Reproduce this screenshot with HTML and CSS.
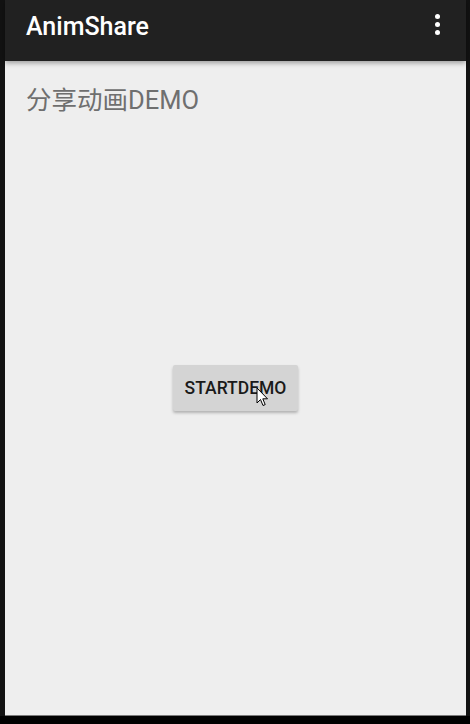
FILE: index.html
```html
<!DOCTYPE html>
<html>
<head>
<meta charset="utf-8">
<link rel="stylesheet" href="styles.css">
</head>
<body>
<div class="frame">
  <div class="screen">
    <header class="appbar">
      <span class="title">AnimShare</span>
      <span class="menu"><i></i><i></i><i></i></span>
    </header>
    <main class="content">
      <p class="label">分享动画DEMO</p>
      <div class="center">
        <button class="btn">STARTDEMO
          <svg class="cursor" width="13" height="20" viewBox="0 0 13 20"><path d="M1 1 L1 16 L4.5 12.5 L7 18.5 L9.2 17.6 L6.8 11.8 L11.5 11.8 Z" fill="#fff" stroke="#000" stroke-width="1" stroke-linejoin="miter"/></svg>
        </button>
      </div>
    </main>
  </div>
  <div class="bottom"></div>
</div>
</body>
</html>
```
FILE: styles.css
```css
html, body {
  margin: 0;
  padding: 0;
  background: #000;
}
.frame {
  width: 470px;
  height: 724px;
  display: flex;
  flex-direction: column;
  background: #121212;
}
.screen {
  margin: 0 4px 0 5px;
  height: 715px;
  display: flex;
  flex-direction: column;
  background: #eeeeee;
  border-bottom: 1px solid #7a7a7a;
}
.bottom {
  flex: 1;
  background: #000;
}
.appbar {
  height: 61px;
  background: #212121;
  display: flex;
  align-items: center;
  justify-content: space-between;
  padding: 0 0 0 21px;
  box-shadow: 0 2px 5px rgba(0,0,0,0.35);
  position: relative;
  z-index: 1;
  flex: none;
}
.title {
  font-family: Roboto, "Liberation Sans", sans-serif;
  font-weight: 500;
  font-size: 25px;
  color: #fff;
  margin-top: -8px;
}
.menu {
  width: 26px;
  margin-right: 16px;
  margin-top: -12px;
  display: flex;
  flex-direction: column;
  align-items: center;
  gap: 3px;
}
.menu i {
  display: block;
  width: 5px;
  height: 5px;
  border-radius: 50%;
  background: #fff;
}
.content {
  flex: 1;
  display: flex;
  flex-direction: column;
}
.label {
  margin: 24px 0 0 21px;
  font-family: Roboto, "Noto Sans CJK SC", sans-serif;
  font-size: 25.5px;
  line-height: 30px;
  color: #6f6f6f;
}
.center {
  display: flex;
  justify-content: center;
  padding-top: 250px;
  padding-left: 0;
}
.btn {
  position: relative;
  width: 125px;
  height: 46px;
  border: none;
  border-radius: 2px;
  background: #d4d4d4;
  box-shadow: 0 2px 3px rgba(0,0,0,0.25);
  font-family: Roboto, "Liberation Sans", sans-serif;
  font-weight: 500;
  font-size: 17.5px;
  color: #1a1a1a;
  padding: 0;
}
.cursor {
  position: absolute;
  left: 83px;
  top: 22px;
}
```
